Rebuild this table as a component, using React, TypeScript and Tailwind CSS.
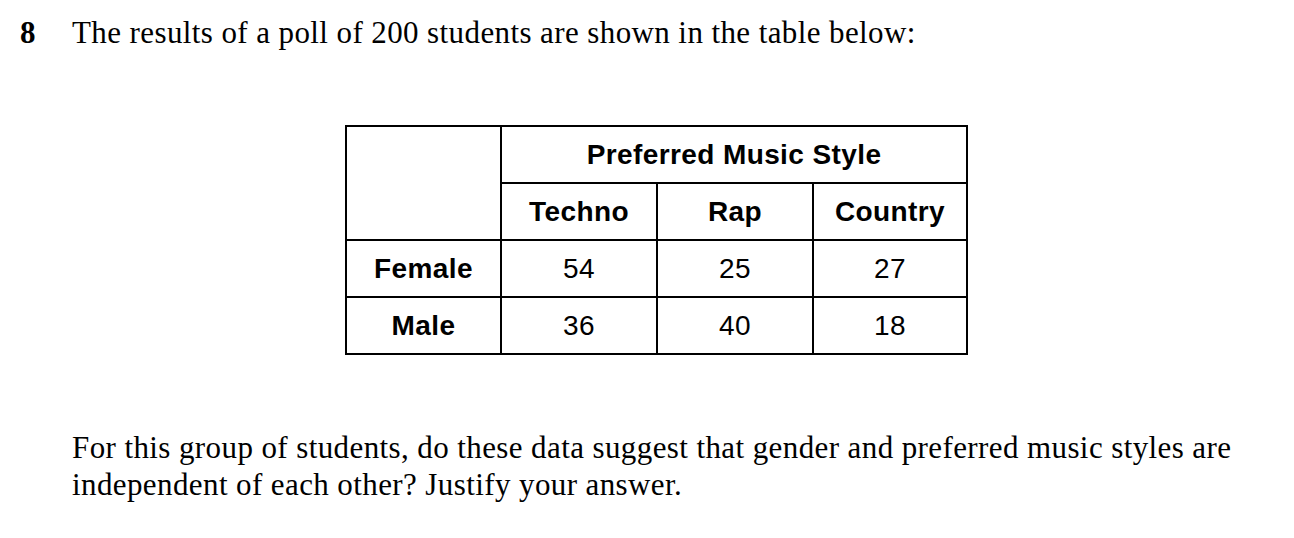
import React from "react";

export default function App() {
  const cell = "border-2 border-black text-center align-middle p-0";
  const sans = "font-['Liberation_Sans',Arial,sans-serif]";
  const serif = "font-['Liberation_Serif','Times_New_Roman',serif] text-[31px] tracking-[0.4px]";
  return (
    <div className="w-[1294px] h-[538px] bg-white text-black overflow-hidden">
      <div className={`flex pt-[15px] leading-[36px] ${serif}`}>
        <div className="w-[72px] pl-[20px] font-bold">8</div>
        <div>The results of a poll of 200 students are shown in the table below:</div>
      </div>
      <div className="flex pl-[345px] pt-[74px]">
        <table className={`border-collapse ${sans} text-[28px] tracking-[0.4px]`}>
          <tbody>
            <tr className="h-[57px]">
              <td rowSpan={2} className={`${cell} w-[155px]`}></td>
              <td colSpan={3} className={`${cell} font-bold`}>Preferred Music Style</td>
            </tr>
            <tr className="h-[57px] font-bold">
              <td className={`${cell} w-[156px]`}>Techno</td>
              <td className={`${cell} w-[156px]`}>Rap</td>
              <td className={`${cell} w-[154px]`}>Country</td>
            </tr>
            <tr className="h-[57px]">
              <td className={`${cell} font-bold`}>Female</td>
              <td className={cell}>54</td>
              <td className={cell}>25</td>
              <td className={cell}>27</td>
            </tr>
            <tr className="h-[57px]">
              <td className={`${cell} font-bold`}>Male</td>
              <td className={cell}>36</td>
              <td className={cell}>40</td>
              <td className={cell}>18</td>
            </tr>
          </tbody>
        </table>
      </div>
      <div className={`pl-[72px] pt-[74px] leading-[37px] ${serif}`}>
        <p>For this group of students, do these data suggest that gender and preferred music styles are</p>
        <p>independent of each other? Justify your answer.</p>
      </div>
    </div>
  );
}
